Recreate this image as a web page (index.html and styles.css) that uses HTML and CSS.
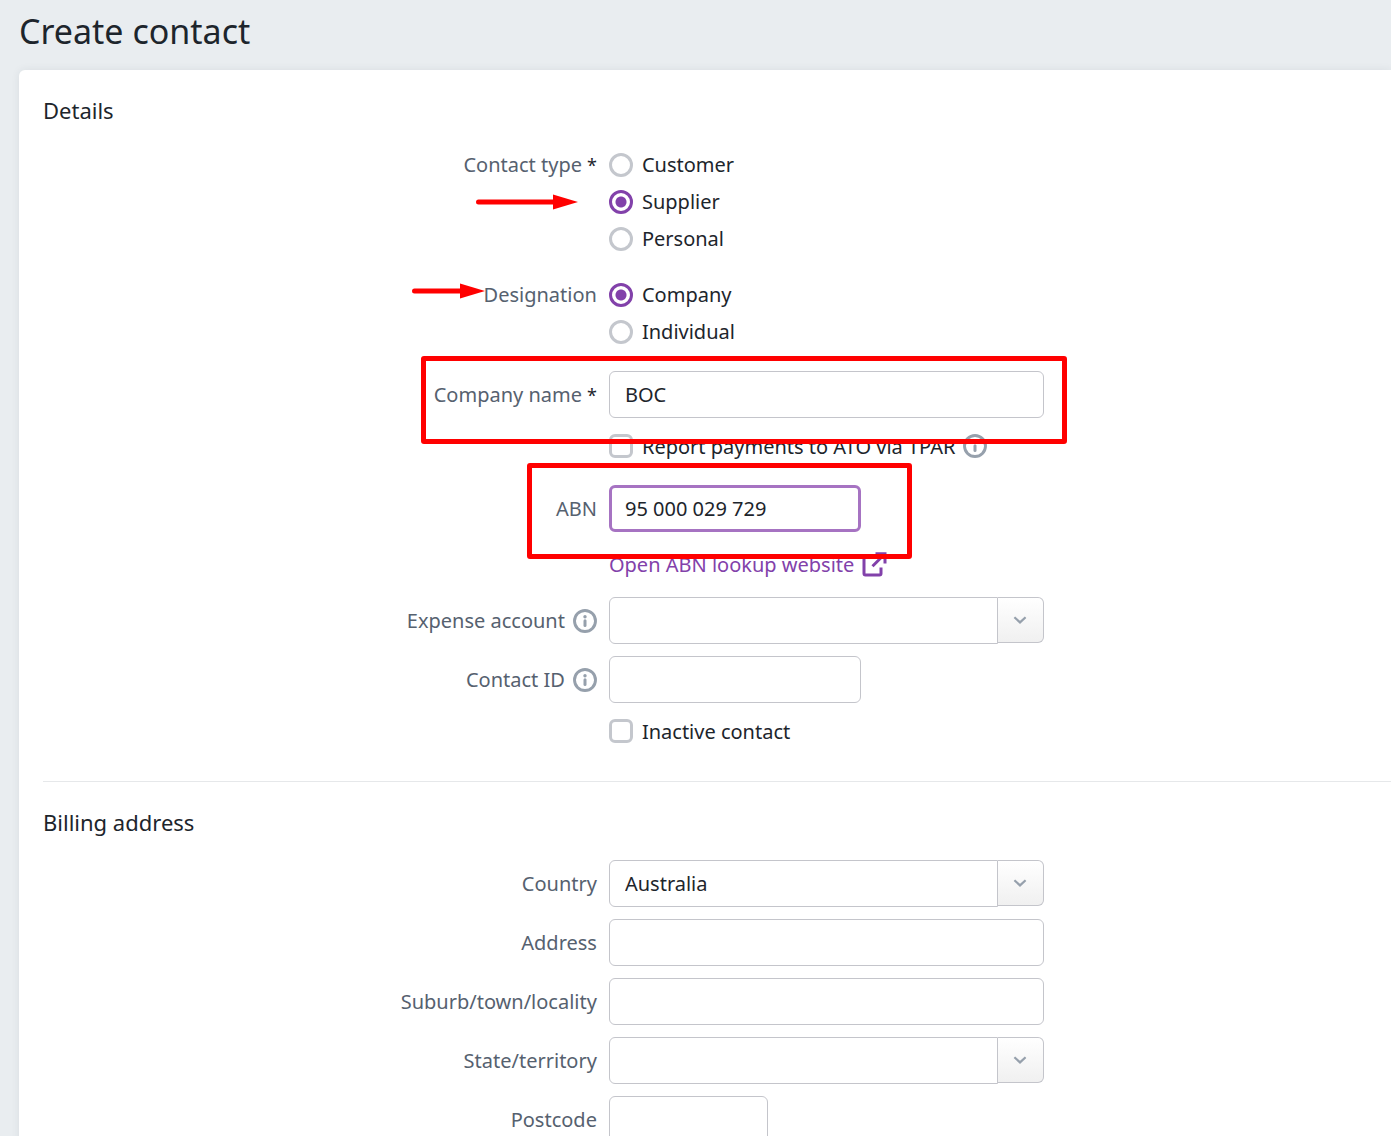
FILE: index.html
```html
<!DOCTYPE html>
<html lang="en">
<head>
<meta charset="utf-8">
<meta name="viewport" content="width=device-width, initial-scale=1">
<title>Create contact</title>
<link rel="stylesheet" href="styles.css">
</head>
<body>
<svg class="sprite" aria-hidden="true">
  <symbol id="info" viewBox="0 0 24 24">
    <circle cx="12" cy="12" r="10.500" fill="none" stroke="currentColor" stroke-width="2.900"/>
    <circle cx="12" cy="7.700" r="1.700" fill="currentColor"/>
    <path d="M12 11.800v4.600" fill="none" stroke="currentColor" stroke-width="3" stroke-linecap="round"/>
  </symbol>
  <symbol id="chevron" viewBox="0 0 14 8">
    <path d="M1.400 1.300L7 6.400l5.600-5.100" fill="none" stroke="currentColor" stroke-width="2.200"/>
  </symbol>
</svg>
<main class="page">
  <h1 class="page-title">Create contact</h1>
  <form class="card">
    <section class="section">
      <h2 class="section-title">Details</h2>
      <div class="rows">
        <div class="row row-choices" role="radiogroup" aria-labelledby="type-label">
          <div class="label" id="type-label">Contact type<span class="required">*</span></div>
          <div class="control choices">
            <label class="choice"><input class="radio" type="radio" name="type">Customer</label>
            <label class="choice"><input class="radio" type="radio" name="type" checked>Supplier</label>
            <label class="choice"><input class="radio" type="radio" name="type">Personal</label>
            <svg class="arrow arrow-supplier" viewBox="0 0 102 16" aria-hidden="true"><path d="M2.500 8h77" stroke="currentColor" stroke-width="5" stroke-linecap="round"/><path d="M77 .500l25 7.500-25 7.500z" fill="currentColor"/></svg>
          </div>
        </div>
        <div class="row row-choices" role="radiogroup" aria-labelledby="designation-label">
          <div class="label" id="designation-label">Designation</div>
          <div class="control choices">
            <label class="choice"><input class="radio" type="radio" name="designation" checked>Company</label>
            <label class="choice"><input class="radio" type="radio" name="designation">Individual</label>
            <svg class="arrow arrow-designation" viewBox="0 0 73 16" aria-hidden="true"><path d="M2.500 8h48" stroke="currentColor" stroke-width="5" stroke-linecap="round"/><path d="M48 .500l25 7.500-25 7.500z" fill="currentColor"/></svg>
          </div>
        </div>
        <div class="row">
          <label class="label" for="company">Company name<span class="required">*</span></label>
          <div class="control">
            <input class="field" id="company" type="text" value="BOC">
            <span class="highlight highlight-company"></span>
          </div>
        </div>
        <div class="row row-check">
          <div class="control control-inline">
            <label class="choice"><input class="checkbox" type="checkbox">Report payments to ATO via TPAR</label>
            <svg class="info"><use href="#info"/></svg>
          </div>
        </div>
        <div class="row">
          <label class="label" for="abn">ABN</label>
          <div class="control">
            <input class="field field-medium field-active" id="abn" type="text" value="95 000 029 729">
            <span class="highlight highlight-abn"></span>
          </div>
        </div>
        <div class="row">
          <div class="control control-inline">
            <a class="link" href="#">Open ABN lookup website
              <svg class="external" viewBox="0 0 25 25" fill="none" stroke="currentColor" stroke-width="3" aria-hidden="true"><path d="M9.500 4.500H3.500a1.500 1.500 0 0 0-1.500 1.500v15.500a1.500 1.500 0 0 0 1.500 1.500h14a1.500 1.500 0 0 0 1.500-1.500v-6M13.500 1.700h9.500v9.800M22.500 2.200L10.500 14.200"/></svg>
            </a>
          </div>
        </div>
        <div class="row">
          <label class="label" for="expense">Expense account<svg class="info"><use href="#info"/></svg></label>
          <div class="control combo">
            <select class="field" id="expense"><option></option></select>
            <button class="combo-button" type="button" aria-label="Show accounts"><svg class="chevron"><use href="#chevron"/></svg></button>
          </div>
        </div>
        <div class="row">
          <label class="label" for="contact-id">Contact ID<svg class="info"><use href="#info"/></svg></label>
          <div class="control"><input class="field field-medium" id="contact-id" type="text"></div>
        </div>
        <div class="row row-check">
          <div class="control control-inline">
            <label class="choice"><input class="checkbox" type="checkbox">Inactive contact</label>
          </div>
        </div>
      </div>
    </section>
    <section class="section">
      <h2 class="section-title">Billing address</h2>
      <div class="rows">
        <div class="row">
          <label class="label" for="country">Country</label>
          <div class="control combo">
            <select class="field" id="country"><option>Australia</option></select>
            <button class="combo-button" type="button" aria-label="Show countries"><svg class="chevron"><use href="#chevron"/></svg></button>
          </div>
        </div>
        <div class="row">
          <label class="label" for="address">Address</label>
          <div class="control"><input class="field" id="address" type="text"></div>
        </div>
        <div class="row">
          <label class="label" for="suburb">Suburb/town/locality</label>
          <div class="control"><input class="field" id="suburb" type="text"></div>
        </div>
        <div class="row">
          <label class="label" for="state">State/territory</label>
          <div class="control combo">
            <select class="field" id="state"><option></option></select>
            <button class="combo-button" type="button" aria-label="Show states"><svg class="chevron"><use href="#chevron"/></svg></button>
          </div>
        </div>
        <div class="row">
          <label class="label" for="postcode">Postcode</label>
          <div class="control"><input class="field field-short" id="postcode" type="text"></div>
        </div>
      </div>
    </section>
  </form>
</main>
</body>
</html>
```
FILE: styles.css
```css
* { box-sizing: border-box; }

body {
  margin: 0;
  background: #e9edf0;
  color: #1d252c;
  font-family: "Noto Sans", "Open Sans", sans-serif;
  font-size: 20px;
}

.sprite { display: none; }

.page {
  height: 100vh;
  padding-left: 19px;
  overflow: hidden auto;
  scrollbar-width: none;
}

.page-title {
  margin: 0;
  padding-bottom: 8px;
  font-size: 34px;
  font-weight: 400;
  line-height: 62px;
}

.card {
  padding-left: 24px;
  background: #fff;
  border-radius: 6px 0 0 0;
  box-shadow: 0 0 8px rgba(40, 50, 70, 0.08);
}

.section { padding: 23px 0; }
.section + .section { border-top: 1px solid #e6e8ea; }

.section-title {
  margin: 0 0 21px;
  font-size: 22px;
  font-weight: 400;
  line-height: 34px;
}

.rows {
  display: flex;
  flex-direction: column;
  gap: 12px;
}

.row {
  display: grid;
  grid-template-columns: 17fr 24fr;
  column-gap: 12px;
}

.row-choices,
.row-check { margin-bottom: 11px; }

.label {
  display: flex;
  justify-content: flex-end;
  align-items: center;
  height: 47px;
  color: #56616f;
  white-space: nowrap;
}

.row-choices .label { height: 33px; }

.required {
  margin-left: 5px;
  color: #1d252c;
  font-size: 18px;
}

.control {
  position: relative;
  grid-column: 2;
  width: 100%;
  max-width: 435px;
}

.control-inline {
  display: flex;
  align-items: center;
  gap: 8px;
}

.choices {
  display: flex;
  flex-direction: column;
  gap: 4px;
}

.choice {
  display: flex;
  align-items: center;
  gap: 9px;
  height: 33px;
  white-space: nowrap;
}

.row-check .choice { height: 32px; }

.radio,
.checkbox {
  flex: none;
  appearance: none;
  width: 24px;
  height: 24px;
  margin: 0;
  border: 3px solid #c4c7cd;
  border-radius: 50%;
  background: #fff;
}

.checkbox { border-radius: 6px; }

.radio:checked {
  border-color: #8241aa;
  background: radial-gradient(circle, #8241aa 5px, #fff 6px);
}

.field {
  display: block;
  width: 100%;
  height: 47px;
  margin: 0;
  padding: 0 15px;
  border: 1px solid #c4c5cb;
  border-radius: 6px;
  outline: 0;
  background: #fff;
  color: #1d252c;
  font: inherit;
  appearance: none;
}

.field-medium { max-width: 252px; }
.field-short { max-width: 159px; }

.field-active {
  padding: 0 13px;
  border: 3px solid #a673c2;
}

.combo { display: flex; }

.combo .field {
  flex: 1;
  min-width: 0;
  border-radius: 6px 0 0 6px;
}

.combo-button {
  display: flex;
  justify-content: center;
  align-items: center;
  width: 46px;
  height: 46px;
  padding: 0;
  border: 1px solid #c4c5cb;
  border-left: 0;
  border-radius: 0 6px 6px 0;
  background: linear-gradient(#fff, #f0f0f0);
  color: #96a0ac;
}

.chevron {
  width: 14px;
  height: 8px;
}

.info {
  flex: none;
  width: 24px;
  height: 24px;
  margin-left: 8px;
  color: #96a0ac;
}

.control-inline .info { margin-left: 0; }

.link {
  display: flex;
  align-items: center;
  gap: 8px;
  height: 41px;
  color: #8241aa;
  text-decoration: none;
  white-space: nowrap;
}

.external {
  width: 25px;
  height: 25px;
}

/* Red call-outs drawn over the form */
.highlight {
  position: absolute;
  z-index: 1;
  border: 5px solid #f00;
  border-radius: 3px;
  pointer-events: none;
}

.highlight-company {
  top: -15px;
  left: -188px;
  width: 646px;
  height: 88px;
}

.highlight-abn {
  top: -22px;
  left: -82px;
  width: 385px;
  height: 96px;
}

.arrow {
  position: absolute;
  height: 16px;
  color: #f00;
}

.arrow-supplier {
  top: 46px;
  left: -133px;
  width: 102px;
}

.arrow-designation {
  top: 5px;
  left: -197px;
  width: 73px;
}
```
